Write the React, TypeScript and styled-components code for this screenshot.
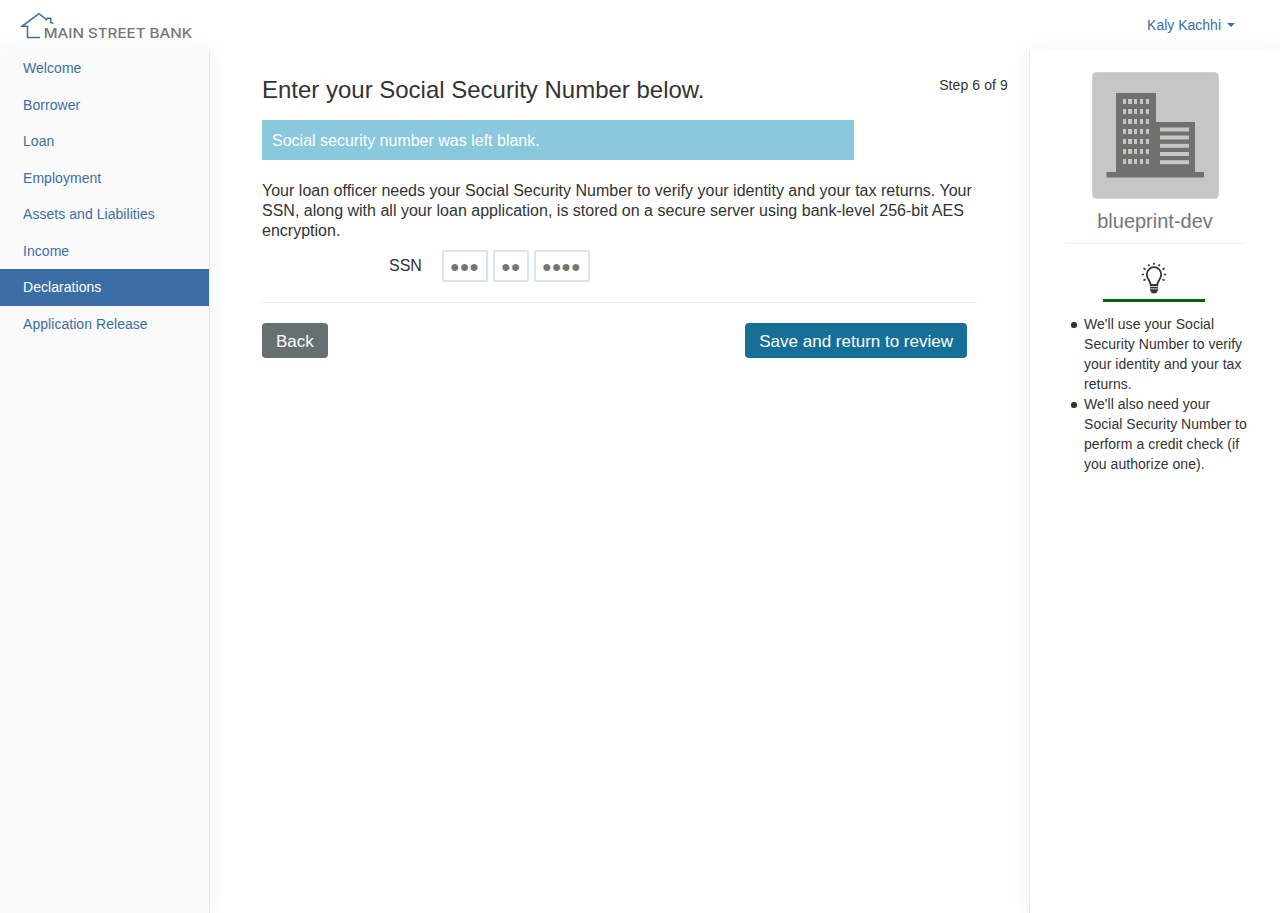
import React from "react";
import styled, { createGlobalStyle } from "styled-components";

const GlobalStyle = createGlobalStyle`
  *, *::before, *::after { box-sizing: border-box; }
  body {
    margin: 0;
    background: #fff;
    color: #333;
    font: 14px/20px "Liberation Sans", Arial, sans-serif;
    overflow: hidden;
  }
`;

const Page = styled.div`
  display: flex;
  flex-direction: column;
  height: 100vh;
`;

const Header = styled.header`
  display: flex;
  justify-content: space-between;
  flex: 0 0 50px;
  padding: 0 45px 0 20px;
`;

const Logo = styled.svg`
  display: block;
  width: 176px;
  height: 50px;
`;

const UserMenu = styled.a`
  display: flex;
  align-items: center;
  gap: 6px;
  height: 50px;
  color: #3c6ea5;
`;

const Caret = styled.span`
  border-top: 4px solid currentColor;
  border-left: 4px solid transparent;
  border-right: 4px solid transparent;
`;

const Body = styled.div`
  display: flex;
  flex: 1;
`;

const Sidebar = styled.nav`
  width: 210px;
  background: #fafafa;
  border-right: 1px solid #e9e9e9;
  box-shadow: 0 0 20px rgba(0, 0, 0, 0.05);
`;

const NavItem = styled.a<{ $active?: boolean }>`
  display: block;
  height: 36.5px;
  padding: 8px 23px;
  color: ${(p) => (p.$active ? "#fff" : "#3c6ea5")};
  background: ${(p) => (p.$active ? "#3c6ea5" : "transparent")};
  letter-spacing: 0.05px;
`;

const Main = styled.main`
  flex: 1;
  padding: 25px 20px 0 52px;
  font-size: 16px;
`;

const TitleRow = styled.div`
  display: flex;
  justify-content: space-between;
  height: 45px;
`;

const Title = styled.h1`
  margin: 0;
  font-size: 24px;
  line-height: 30px;
  font-weight: 400;
  letter-spacing: -0.01px;
`;

const Step = styled.span`
  padding: 0 1px 0 0;
  font-size: 14px;
  letter-spacing: 0.1px;
`;

const Alert = styled.div`
  width: 592px;
  padding: 11px 10px 9px;
  background: #8ac8dd;
  color: #fff;
`;

const Intro = styled.p`
  width: 715px;
  margin: 21px 0 9px;
  letter-spacing: 0.01px;
`;

const Field = styled.div`
  display: flex;
  gap: 5px;
  padding-left: 127px;
`;

const Label = styled.label`
  width: 48px;
  padding-top: 6px;
`;

const SsnInput = styled.input<{ $width: number }>`
  width: ${(p) => p.$width}px;
  height: 32px;
  padding: 2px 0 0 6px;
  border: 2px solid #dae4eb;
  border-radius: 2px;
  background: #fff;
  font: 16px "Liberation Sans", Arial, sans-serif;
  &::placeholder { color: #757575; opacity: 1; }
`;

const Actions = styled.div`
  display: flex;
  justify-content: space-between;
  width: 715px;
  margin-top: 20px;
  padding: 20px 10px 0 0;
  border-top: 1px solid #eee;
`;

const Button = styled.button<{ $color: string }>`
  height: 35px;
  padding: 3px 14px 0;
  border: 0;
  border-radius: 4px;
  background: ${(p) => p.$color};
  color: #fff;
  font: 17px "Liberation Sans", Arial, sans-serif;
`;

const Aside = styled.aside`
  display: flex;
  flex-direction: column;
  align-items: center;
  width: 251px;
  padding-top: 22px;
  border-left: 1px solid #e9e9e9;
  background: #fff;
  box-shadow: 0 0 20px rgba(0, 0, 0, 0.05);
`;

const Building = styled.svg`
  width: 127px;
  height: 127px;
`;

const Company = styled.div`
  width: 180px;
  height: 45px;
  padding-top: 12px;
  border-bottom: 1px solid #eee;
  color: #777;
  font-size: 20px;
  text-align: center;
`;

const TipMark = styled.div`
  width: 102px;
  height: 58px;
  margin-right: 2px;
  padding: 18px 0 0 38px;
  border-bottom: 3px solid #006400;
`;

const Bulb = styled.svg`
  display: block;
  width: 26px;
  height: 32px;
`;

const Tips = styled.ul`
  align-self: flex-start;
  width: 220px;
  margin: 12px 0 0;
  padding: 0 0 0 41px;
  list-style: none;
`;

const Tip = styled.li`
  display: flex;
  gap: 7.5px;
  letter-spacing: 0.04px;
  &::before {
    content: "";
    flex: 0 0 5.5px;
    height: 5.5px;
    margin-top: 8px;
    border-radius: 50%;
    background: #333;
  }
`;

const navItems = [
  "Welcome", "Borrower", "Loan", "Employment",
  "Assets and Liabilities", "Income", "Declarations", "Application Release",
];

const windowColumns = [31, 36, 42, 48, 54];
const windowRows = [27, 37, 47, 57, 67, 77, 87];
const slatRows = [55.5, 63.5, 71.8, 80, 88.2];

export default function App() {
  return (
    <Page>
      <GlobalStyle />
      <Header>
        <Logo viewBox="0 0 176 50">
          <path
            d="M20 37.5H7.5V26.3H2L19 13.7l7.5 6L27.3 18.2h3.4v4l2.6 1.4"
            fill="none" stroke="#3c6ea5" strokeWidth="1.5"
          />
          <text
            x="23.7" y="38" textLength="148.5" lengthAdjust="spacingAndGlyphs"
            fill="#757575" fontFamily="Inter, sans-serif" fontSize="12.8" fontWeight="500"
          >MAIN STREET BANK</text>
        </Logo>
        <UserMenu>Kaly Kachhi<Caret /></UserMenu>
      </Header>
      <Body>
        <Sidebar>
          {navItems.map((item) => (
            <NavItem key={item} $active={item === "Declarations"}>{item}</NavItem>
          ))}
        </Sidebar>
        <Main>
          <TitleRow>
            <Title>Enter your Social Security Number below.</Title>
            <Step>Step 6 of 9</Step>
          </TitleRow>
          <Alert>Social security number was left blank.</Alert>
          <Intro>
            Your loan officer needs your Social Security Number to verify your identity and your tax
            returns. Your SSN, along with all your loan application, is stored on a secure server using
            bank-level 256-bit AES encryption.
          </Intro>
          <Field>
            <Label>SSN</Label>
            <SsnInput $width={46} placeholder="●●●" />
            <SsnInput $width={36} placeholder="●●" />
            <SsnInput $width={56} placeholder="●●●●" />
          </Field>
          <Actions>
            <Button $color="#667070">Back</Button>
            <Button $color="#166f97">Save and return to review</Button>
          </Actions>
        </Main>
        <Aside>
          <Building viewBox="0 0 127 127">
            <rect x="0.5" y="0.5" width="126" height="126" rx="4" fill="#c6c6c6" stroke="#d0d0d0" />
            <path d="M24 21H64V50H103V100H112V105.5H14.5V100H24Z" fill="#70706f" />
            {windowRows.map((y) =>
              windowColumns.map((x) => (
                <rect key={`${x}-${y}`} x={x} y={y} width={x === 36 ? 4 : 3} height="5" fill="#c6c6c6" />
              ))
            )}
            {slatRows.map((y) => (
              <rect key={y} x="68" y={y} width="29" height="4" fill="#c6c6c6" />
            ))}
          </Building>
          <Company>blueprint-dev</Company>
          <TipMark>
            <Bulb viewBox="0 0 26 32" fill="none" stroke="#333">
              <path
                d="M9.7 23C9.7 19 5.8 17.2 5.8 12.4a7.2 7.2 0 0 1 14.4 0C20.2 17.2 16.3 19 16.3 23Z"
                strokeWidth="1.8"
              />
              <path d="M9 25.6h8M9 28.2h8M10.3 30.2h5.4" strokeWidth="1.9" />
              <path
                d="M13 .8v2M7.3 2.3l1 1.8M18.7 2.3l-1 1.8M2.5 6.2l2 1.2M23.5 6.2l-2 1.2M.8 12.5h2.3M22.9 12.5h2.3M2.5 18.5l2-1.2M23.5 18.5l-2-1.2"
                strokeWidth="1.7"
              />
            </Bulb>
          </TipMark>
          <Tips>
            <Tip>We'll use your Social Security Number to verify your identity and your tax returns.</Tip>
            <Tip>We'll also need your Social Security Number to perform a credit check (if you authorize one).</Tip>
          </Tips>
        </Aside>
      </Body>
    </Page>
  );
}
